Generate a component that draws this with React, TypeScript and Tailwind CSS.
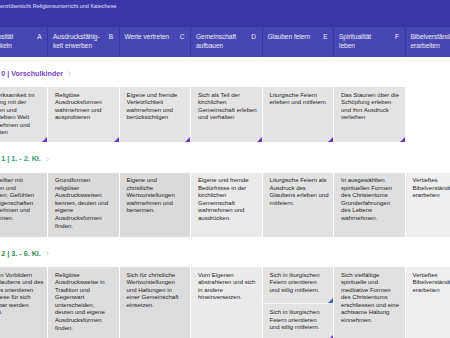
import { ChevronRight } from "lucide-react";

interface Sub {
  lines: string[];
  tri?: string;
}

interface Cell {
  bg: string;
  parts: Sub[];
}

interface Row {
  stufe: string;
  label: string;
  color: string;
  chevron: string;
  height: string;
  cells: (Cell | null)[];
}

const columns = [
  { title: ["Religiosität", "entwickeln"], key: "A" },
  { title: ["Ausdrucksfähig-", "keit erwerben"], key: "B" },
  { title: ["Werte vertreten"], key: "C" },
  { title: ["Gemeinschaft", "aufbauen"], key: "D" },
  { title: ["Glauben feiern"], key: "E" },
  { title: ["Spiritualität", "leben"], key: "F" },
  { title: ["Bibelverständnis", "erarbeiten"], key: "G" },
];

const PURPLE = "#6438c8";
const BLUE = "#3d5fc6";

const rows: Row[] = [
  {
    stufe: "Zyklus 0",
    label: "Vorschulkinder",
    color: "text-[#7a44cc]",
    chevron: "text-[#a88ae0]",
    height: "h-[55px]",
    cells: [
      { bg: "bg-[#e3e3e3]", parts: [{ lines: ["Aufmerksamkeit im", "Umgang mit der", "eigenen und", "der erlebten Welt", "wahrnehmen und", "gestalten"], tri: PURPLE }] },
      { bg: "bg-[#e5e5e5]", parts: [{ lines: ["Religiöse", "Ausdrucksformen", "wahrnehmen und", "ausprobieren"], tri: PURPLE }] },
      { bg: "bg-[#e4e4e4]", parts: [{ lines: ["Eigene und fremde", "Verletzlichkeit", "wahrnehmen und", "berücksichtigen"], tri: PURPLE }] },
      { bg: "bg-[#e3e3e3]", parts: [{ lines: ["Sich als Teil der", "kirchlichen", "Gemeinschaft erleben", "und verhalten"], tri: PURPLE }] },
      { bg: "bg-[#e4e4e4]", parts: [{ lines: ["Liturgische Feiern", "erleben und mitfeiern"], tri: PURPLE }] },
      { bg: "bg-[#e3e3e3]", parts: [{ lines: ["Das Staunen über die", "Schöpfung erleben", "und ihm Ausdruck", "verleihen"], tri: PURPLE }] },
      null,
    ],
  },
  {
    stufe: "Zyklus 1",
    label: "1. - 2. Kl.",
    color: "text-[#2f9a76]",
    chevron: "text-[#7cc4a8]",
    height: "h-[64px]",
    cells: [
      { bg: "bg-[#dadada]", parts: [{ lines: ["Sich selber mit", "Stärken und", "Grenzen, Gefühlen", "und Eigenschaften", "wahrnehmen und", "annehmen."] }] },
      { bg: "bg-[#dbdbdb]", parts: [{ lines: ["Grundformen", "religiöser", "Ausdrucksweisen", "kennen, deuten und", "eigene", "Ausdrucksformen", "finden."] }] },
      { bg: "bg-[#dadada]", parts: [{ lines: ["Eigene und", "christliche", "Wertvorstellungen", "wahrnehmen und", "benennen."] }] },
      { bg: "bg-[#eaeaea]", parts: [{ lines: ["Eigene und fremde", "Bedürfnisse in der", "kirchlichen", "Gemeinschaft", "wahrnehmen und", "ausdrücken."] }] },
      { bg: "bg-[#e2e2e2]", parts: [{ lines: ["Liturgische Feiern als", "Ausdruck des", "Glaubens erleben und", "mitfeiern."] }] },
      { bg: "bg-[#dfdfdf]", parts: [{ lines: ["In ausgewählten", "spirituellen Formen", "des Christentums", "Grunderfahrungen", "des Lebens", "wahrnehmen."] }] },
      { bg: "bg-[#eeeeee]", parts: [{ lines: ["Vertieftes", "Bibelverständnis", "erarbeiten"] }] },
    ],
  },
  {
    stufe: "Zyklus 2",
    label: "3. - 6. Kl.",
    color: "text-[#2e8b4f]",
    chevron: "text-[#7fbf93]",
    height: "h-[76px]",
    cells: [
      { bg: "bg-[#dcdcdc]", parts: [{ lines: ["Sich an Vorbildern", "des Glaubens und des", "Lebens orientieren", "und diese für sich", "fruchtbar werden", "lassen."] }] },
      { bg: "bg-[#dddddd]", parts: [{ lines: ["Religiöse", "Ausdrucksweise in", "Tradition und", "Gegenwart", "unterscheiden,", "deuten und eigene", "Ausdrucksformen", "finden."] }] },
      { bg: "bg-[#dcdcdc]", parts: [{ lines: ["Sich für christliche", "Wertvorstellungen", "und Haltungen in", "einer Gemeinschaft", "einsetzen."] }] },
      { bg: "bg-[#ebebeb]", parts: [{ lines: ["Vom Eigenen", "abstrahieren und sich", "in andere", "hineinversetzen."] }] },
      {
        bg: "bg-[#e3e3e3]",
        parts: [
          { lines: ["Sich in liturgischen", "Feiern orientieren", "und stilig mitfeiern."], tri: BLUE },
          { lines: ["Sich in liturgischen", "Feiern orientieren", "und stilig mitfeiern."], tri: PURPLE },
        ],
      },
      { bg: "bg-[#e1e1e1]", parts: [{ lines: ["Sich vielfältige", "spirituelle und", "meditative Formen", "des Christentums", "erschliessen und eine", "achtsame Haltung", "einnehmen."] }] },
      { bg: "bg-[#eeeeee]", parts: [{ lines: ["Vertieftes", "Bibelverständnis", "erarbeiten"] }] },
    ],
  },
];

function Corner({ color }: { color: string }) {
  return (
    <svg className="absolute bottom-0 right-0" width="5" height="5" viewBox="0 0 5 5">
      <polygon points="5,0 5,5 0,5" fill={color} />
    </svg>
  );
}

function CellText({ lines }: { lines: string[] }) {
  return (
    <div className="text-[6px] leading-[7.6px] text-[#232323] whitespace-nowrap">
      {lines.map((l, i) => (
        <div key={i}>{l}</div>
      ))}
    </div>
  );
}

export default function App() {
  return (
    <div
      className="w-[450px] h-[338px] overflow-hidden bg-white"
      style={{ fontFamily: '"Liberation Sans", Arial, sans-serif' }}
    >
      <div className="w-[530px] -ml-[23.5px]">
        {/* title bar */}
        <div className="h-[26.5px] bg-[#3a38a8] pl-[4.5px] pt-[3px] text-[5.5px] leading-[7px] text-white/85">
          Kompetenzübersicht Religionsunterricht und Katechese
        </div>

        {/* column headers */}
        <div className="grid grid-cols-[repeat(7,70.5px)_1fr] gap-x-px bg-[#3636a0] h-[30px]">
          {columns.map((c) => (
            <div
              key={c.key}
              className="bg-[#4747b3] flex justify-between pl-[5px] pr-[5.5px] pt-[5px] text-[6.5px] leading-[9px] text-white/90 overflow-hidden"
            >
              <div className="whitespace-nowrap">
                {c.title.map((t, i) => (
                  <div key={i}>{t}</div>
                ))}
              </div>
              <span>{c.key}</span>
            </div>
          ))}
          <div className="bg-[#4747b3]" />
        </div>

        {rows.map((row) => (
          <div key={row.stufe}>
            <div
              className={`mt-[12px] mb-[8.5px] h-[10px] flex items-center gap-[3px] text-[7.2px] leading-[10px] font-bold ${row.color}`}
            >
              <span>
                {row.stufe} | {row.label}
              </span>
              <ChevronRight size={7} strokeWidth={2} className={row.chevron} />
            </div>
            <div className={`grid grid-cols-[repeat(7,70.5px)] gap-x-px ${row.height}`}>
              {row.cells.map((cell, i) =>
                cell ? (
                  <div key={i} className={`flex flex-col gap-px overflow-hidden ${cell.bg}`}>
                    {cell.parts.map((p, j) => (
                      <div
                        key={j}
                        className={`relative pl-[7px] pt-[4.5px] ${
                          cell.parts.length > 1 ? "h-[36.5px] border-b border-[#f2f2f2]" : "flex-1"
                        }`}
                      >
                        <CellText lines={p.lines} />
                        {p.tri && <Corner color={p.tri} />}
                      </div>
                    ))}
                  </div>
                ) : (
                  <div key={i} />
                )
              )}
            </div>
          </div>
        ))}
      </div>
    </div>
  );
}
